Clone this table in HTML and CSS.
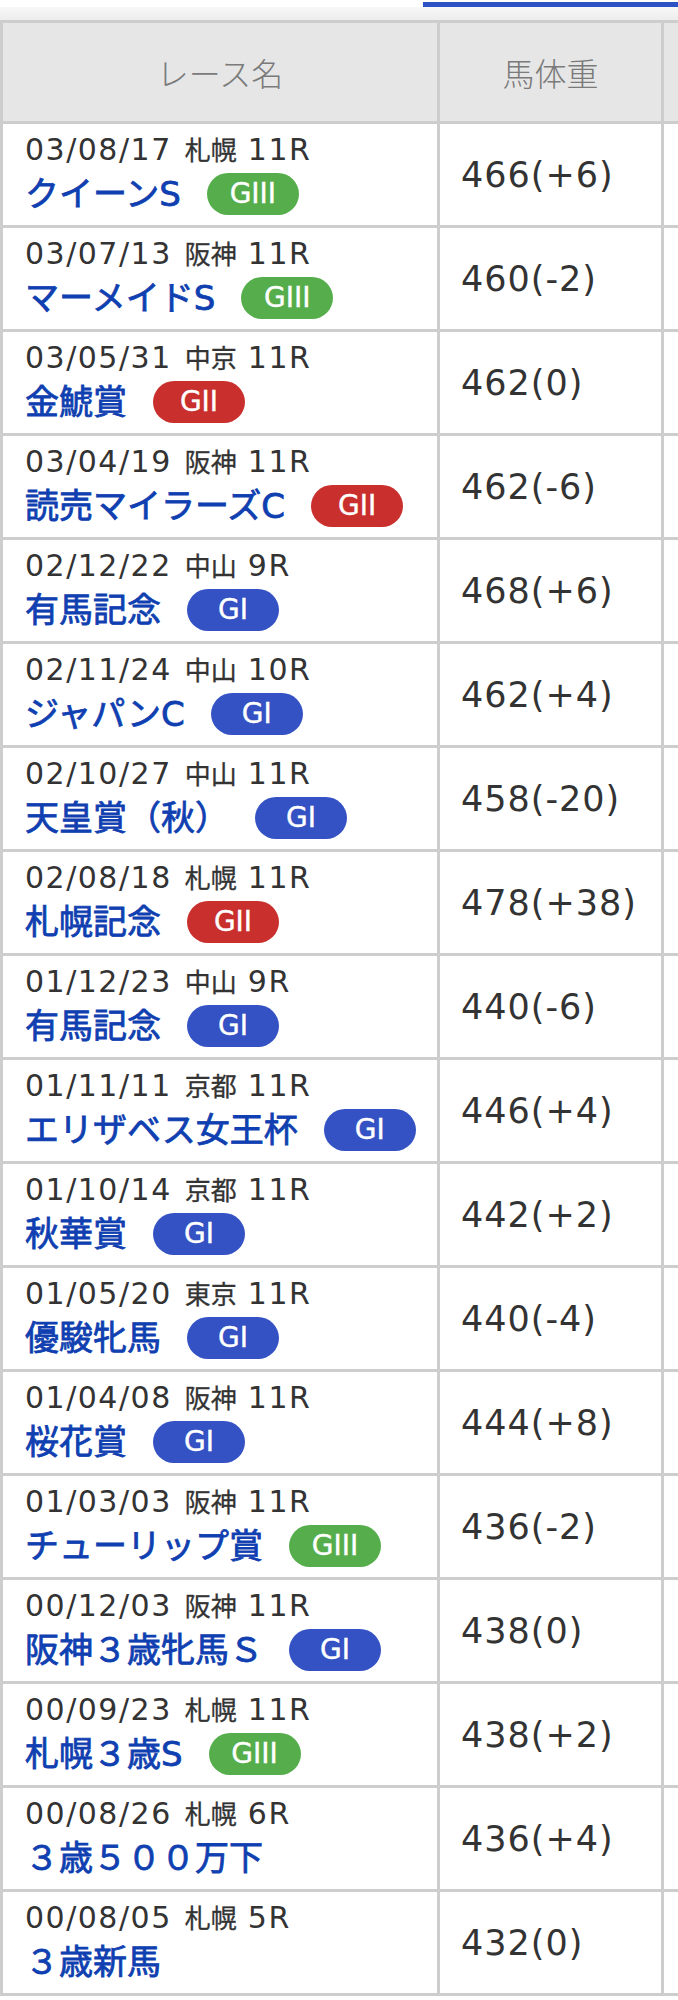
FILE: index.html
```html
<!DOCTYPE html>
<html lang="ja">
<head>
<meta charset="utf-8">
<title>成績</title>
<link rel="stylesheet" href="styles.css">
</head>
<body>
<div class="page">
  <div class="tabs">
    <div class="tab"></div>
    <div class="tab tab-active"></div>
  </div>
  <div class="shade"></div>
  <div class="scroller">
    <table class="results">
      <thead>
        <tr>
          <th class="c-race">レース名</th>
          <th class="c-weight">馬体重</th>
          <th class="c-extra"></th>
        </tr>
      </thead>
      <tbody>
        <tr><td class="race"><div class="meta"><span class="date">03/08/17</span> <span class="venue">札幌</span> <span class="rno">11R</span></div><div class="name"><span class="rname">クイーンS</span><span class="grade g3">GIII</span></div></td><td class="weight">466(+6)</td><td class="extra"></td></tr>
        <tr><td class="race"><div class="meta"><span class="date">03/07/13</span> <span class="venue">阪神</span> <span class="rno">11R</span></div><div class="name"><span class="rname">マーメイドS</span><span class="grade g3">GIII</span></div></td><td class="weight">460(-2)</td><td class="extra"></td></tr>
        <tr><td class="race"><div class="meta"><span class="date">03/05/31</span> <span class="venue">中京</span> <span class="rno">11R</span></div><div class="name"><span class="rname">金鯱賞</span><span class="grade g2">GII</span></div></td><td class="weight">462(0)</td><td class="extra"></td></tr>
        <tr><td class="race"><div class="meta"><span class="date">03/04/19</span> <span class="venue">阪神</span> <span class="rno">11R</span></div><div class="name"><span class="rname">読売マイラーズC</span><span class="grade g2">GII</span></div></td><td class="weight">462(-6)</td><td class="extra"></td></tr>
        <tr><td class="race"><div class="meta"><span class="date">02/12/22</span> <span class="venue">中山</span> <span class="rno">9R</span></div><div class="name"><span class="rname">有馬記念</span><span class="grade g1">GI</span></div></td><td class="weight">468(+6)</td><td class="extra"></td></tr>
        <tr><td class="race"><div class="meta"><span class="date">02/11/24</span> <span class="venue">中山</span> <span class="rno">10R</span></div><div class="name"><span class="rname">ジャパンC</span><span class="grade g1">GI</span></div></td><td class="weight">462(+4)</td><td class="extra"></td></tr>
        <tr><td class="race"><div class="meta"><span class="date">02/10/27</span> <span class="venue">中山</span> <span class="rno">11R</span></div><div class="name"><span class="rname">天皇賞（秋）</span><span class="grade g1">GI</span></div></td><td class="weight">458(-20)</td><td class="extra"></td></tr>
        <tr><td class="race"><div class="meta"><span class="date">02/08/18</span> <span class="venue">札幌</span> <span class="rno">11R</span></div><div class="name"><span class="rname">札幌記念</span><span class="grade g2">GII</span></div></td><td class="weight">478(+38)</td><td class="extra"></td></tr>
        <tr><td class="race"><div class="meta"><span class="date">01/12/23</span> <span class="venue">中山</span> <span class="rno">9R</span></div><div class="name"><span class="rname">有馬記念</span><span class="grade g1">GI</span></div></td><td class="weight">440(-6)</td><td class="extra"></td></tr>
        <tr><td class="race"><div class="meta"><span class="date">01/11/11</span> <span class="venue">京都</span> <span class="rno">11R</span></div><div class="name"><span class="rname">エリザベス女王杯</span><span class="grade g1">GI</span></div></td><td class="weight">446(+4)</td><td class="extra"></td></tr>
        <tr><td class="race"><div class="meta"><span class="date">01/10/14</span> <span class="venue">京都</span> <span class="rno">11R</span></div><div class="name"><span class="rname">秋華賞</span><span class="grade g1">GI</span></div></td><td class="weight">442(+2)</td><td class="extra"></td></tr>
        <tr><td class="race"><div class="meta"><span class="date">01/05/20</span> <span class="venue">東京</span> <span class="rno">11R</span></div><div class="name"><span class="rname">優駿牝馬</span><span class="grade g1">GI</span></div></td><td class="weight">440(-4)</td><td class="extra"></td></tr>
        <tr><td class="race"><div class="meta"><span class="date">01/04/08</span> <span class="venue">阪神</span> <span class="rno">11R</span></div><div class="name"><span class="rname">桜花賞</span><span class="grade g1">GI</span></div></td><td class="weight">444(+8)</td><td class="extra"></td></tr>
        <tr><td class="race"><div class="meta"><span class="date">01/03/03</span> <span class="venue">阪神</span> <span class="rno">11R</span></div><div class="name"><span class="rname">チューリップ賞</span><span class="grade g3">GIII</span></div></td><td class="weight">436(-2)</td><td class="extra"></td></tr>
        <tr><td class="race"><div class="meta"><span class="date">00/12/03</span> <span class="venue">阪神</span> <span class="rno">11R</span></div><div class="name"><span class="rname">阪神３歳牝馬Ｓ</span><span class="grade g1">GI</span></div></td><td class="weight">438(0)</td><td class="extra"></td></tr>
        <tr><td class="race"><div class="meta"><span class="date">00/09/23</span> <span class="venue">札幌</span> <span class="rno">11R</span></div><div class="name"><span class="rname">札幌３歳S</span><span class="grade g3">GIII</span></div></td><td class="weight">438(+2)</td><td class="extra"></td></tr>
        <tr><td class="race"><div class="meta"><span class="date">00/08/26</span> <span class="venue">札幌</span> <span class="rno">6R</span></div><div class="name"><span class="rname">３歳５００万下</span></div></td><td class="weight">436(+4)</td><td class="extra"></td></tr>
        <tr><td class="race"><div class="meta"><span class="date">00/08/05</span> <span class="venue">札幌</span> <span class="rno">5R</span></div><div class="name"><span class="rname">３歳新馬</span></div></td><td class="weight">432(0)</td><td class="extra"></td></tr>
      </tbody>
    </table>
  </div>
</div>
</body>
</html>
```

FILE: styles.css
```css
html, body {
  margin: 0;
  padding: 0;
  background: #ffffff;
}

.page {
  width: 678px;
  overflow: hidden;
  font-family: "DejaVu Sans", "Noto Sans CJK JP", sans-serif;
  color: #333333;
}

.tabs {
  display: flex;
  height: 7px;
  background: #ffffff;
}

.tab {
  flex: 1 1 auto;
}

.tab-active {
  flex: 0 0 255px;
  box-sizing: border-box;
  border-bottom: 5px solid #2d52c6;
}

.shade {
  height: 13px;
  background: linear-gradient(#f8f8f8, #ededed);
}

.scroller {
  overflow: hidden;
}

.results {
  table-layout: fixed;
  width: 864px;
  border-collapse: separate;
  border-spacing: 0;
  border-top: 3px solid #cdcdcd;
  border-left: 3px solid #cdcdcd;
}

.results th,
.results td {
  border-right: 3px solid #cdcdcd;
  border-bottom: 3px solid #cdcdcd;
}

.results th {
  height: 98px;
  padding: 0;
  background: #e6e6e6;
  font-family: "Noto Sans CJK JP", sans-serif;
  font-size: 32px;
  font-weight: 300;
  color: #7a7a7a;
  text-align: center;
  vertical-align: middle;
  line-height: 40px;
}

.c-race { width: 434px; }
.c-weight { width: 221px; }
.c-extra { width: 197px; }

.results td {
  background: #ffffff;
  vertical-align: middle;
}

.race {
  padding: 7px 0 10px 22px;
}

.meta {
  height: 36px;
  line-height: 36px;
  font-size: 30px;
  letter-spacing: 1.5px;
  color: #333333;
  white-space: nowrap;
}

.venue {
  font-family: "Noto Sans CJK JP", sans-serif;
  font-size: 26px;
  letter-spacing: 0;
  margin-left: 2px;
  -webkit-text-stroke: 0.3px #333333;
}

.name {
  margin-top: 6px;
  height: 42px;
  display: flex;
  align-items: center;
  font-size: 34px;
  line-height: 42px;
  white-space: nowrap;
}

.rname {
  color: #0f3fb0;
  font-weight: 400;
  -webkit-text-stroke: 0.8px #0f3fb0;
}

.grade {
  flex: 0 0 92px;
  height: 42px;
  margin-left: 26px;
  border-radius: 21px;
  display: inline-flex;
  align-items: center;
  justify-content: center;
  font-family: "DejaVu Sans", sans-serif;
  font-size: 28px;
  line-height: 42px;
  color: #ffffff;
  -webkit-text-stroke: 0.4px #ffffff;
}

.g1 { background: #3452c3; }
.g2 { background: #c9302d; }
.g3 { background: #55ae4b; }

.weight {
  padding: 0 0 0 21px;
  font-size: 35px;
  letter-spacing: 1px;
  line-height: 40px;
  color: #333333;
  white-space: nowrap;
}

.extra {
  padding: 0;
}
```
